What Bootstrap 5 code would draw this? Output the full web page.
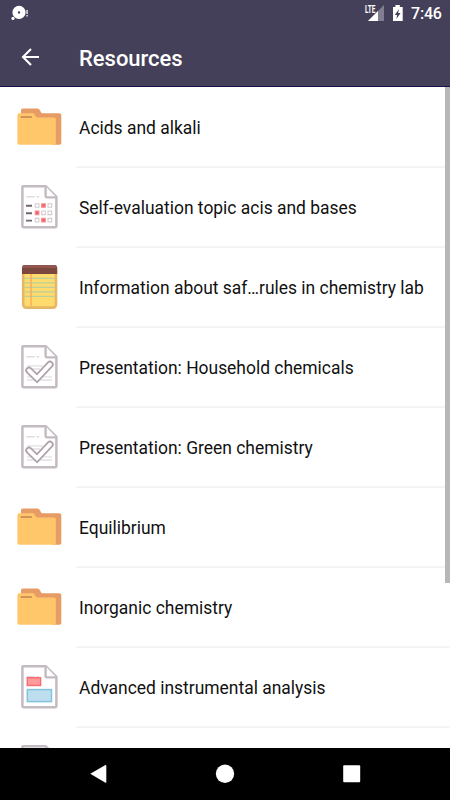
<!DOCTYPE html>
<html lang="en">
<head>
<meta charset="utf-8">
<meta name="viewport" content="width=device-width, initial-scale=1">
<title>Resources</title>
<link href="https://cdn.jsdelivr.net/npm/bootstrap@5.3.0/dist/css/bootstrap.min.css" rel="stylesheet">
<style>
body { font-family: Roboto, sans-serif; color: #111; }
.screen { width: 450px; height: 800px; }
.top-area { height: 87px; background: #454059; border-bottom: 1px solid #1f1048; }
.status { height: 27px; padding: 0 9px 0 10px; }
.clock { width: 30px; font-size: 16px; font-weight: 500; line-height: 28px; padding-top: 1px; letter-spacing: -.2px; }
.title-bar { height: 60px; padding-left: 18px; }
.title { font-size: 22px; font-weight: 500; line-height: 60px; margin: 3px 0 0 36px; letter-spacing: -.02px; }
.resource { height: 80px; padding-left: 17px; }
.resource svg { width: 46px; height: 46px; margin-right: 13px; }
.label-area { height: 80px; padding: 2px 0 0 3px; box-shadow: 0 1px #f3f3f3, inset 0 -1px #f6f6f6; font-size: 17.45px; }
.scroll-thumb { width: 5px; height: 496px; top: 0; right: 0; background: #b7b7b7; }
.system-nav { height: 52px; }
</style>
</head>
<body>
<svg width="0" height="0" class="position-absolute" aria-hidden="true">
  <defs>
    <symbol id="folder" viewBox="0 0 46 46">
      <path d="M4 12V6.2Q4 4.5 5.8 4.5H20.5Q22 4.5 22.8 6L24.6 9.2H42.4Q44.3 9.2 44.3 11V39Q44.3 40.8 42.5 40.8H36Z" fill="#e79c65"/>
      <path d="M.4 11Q.4 9.2 2.2 9.2H15.8Q17 9.2 17.6 10.4L19 12.8Q19.5 13.6 20.5 13.6H37Q38.8 13.6 38.8 15.4V40.8H2.2Q.4 40.8 .4 39Z" fill="#ffc66a"/>
      <path d="M3.6 13H14.8" stroke="#cf9556" stroke-width="2"/>
    </symbol>
    <symbol id="sheet" viewBox="0 0 46 46">
      <path d="M6 2.2H28.6L39.4 13V42Q39.4 43.2 38.2 43.2H6.4Q5.4 43.2 5.4 42V3Q5.4 2.2 6 2.2Z" fill="#fff" stroke="#c3bac2" stroke-width="2.5" stroke-linejoin="round"/>
      <path d="M28.6 2.2V12.2Q28.6 13.4 29.8 13.4H39.4" fill="#fff" stroke="#c3bac2" stroke-width="2.4" stroke-linejoin="round"/>
      <path d="M9.5 12.8H17.5M19.5 12.8H22" stroke="#e0dadf" stroke-width="1.4"/>
    </symbol>
    <symbol id="topsheet" viewBox="0 0 46 46">
      <path d="M5.4 46V3Q5.4 2.2 6 2.2H28.6L39.4 13V46Z" fill="#fff" stroke="#c3bac2" stroke-width="2.5"/>
    </symbol>
    <symbol id="quiz" viewBox="0 0 46 46">
      <use href="#sheet"/>
      <path d="M9 21.8H15M9 29.2H15M9 36.6H15" stroke="#746672" stroke-width="1.9"/>
      <g fill="#fff" stroke="#d2cad0" stroke-width="1.1">
        <path d="M18.3 19.7h3.6v3.6h-3.6zM31 19.7h3.6v3.6h-3.6zM24.7 27h3.6v3.6h-3.6zM31 27h3.6v3.6h-3.6zM18.3 34.4h3.6v3.6h-3.6zM31 34.4h3.6v3.6h-3.6z"/>
        <path d="M24.7 19.7h3.6v3.6h-3.6zM18.3 27h3.6v3.6h-3.6zM24.7 34.4h3.6v3.6h-3.6z" fill="#fb5c62" stroke="#f48e94"/>
      </g>
    </symbol>
    <symbol id="notepad" viewBox="0 0 46 46">
      <rect x="6.2" y="3" width="32.8" height="40.6" rx="3" fill="#ffda6c" stroke="#e5b765" stroke-width="2.6"/>
      <path d="M7.5 14.4H37.8M7.5 18.9H37.8M7.5 23.4H37.8M7.5 27.9H37.8M7.5 32.4H37.8" stroke="#b9d09a" stroke-width="1.4"/>
      <path d="M14 10V42" stroke="#fba65b" stroke-width="1.3"/>
      <path d="M5 10V4Q5 1 8 1H37Q40.2 1 40.2 4V10Z" fill="#7c473f"/>
      <path d="M5 4Q5 1 8 1H37Q40.2 1 40.2 4Z" fill="#91574e"/>
    </symbol>
    <symbol id="check" viewBox="0 0 46 46">
      <use href="#sheet"/>
      <path d="M10 21.8H26M10 25H23M10 32.8H35M10 36H35" stroke="#e4dfe3" stroke-width="1.3"/>
      <path d="M12 26.4L20 34.2L33 20.4" fill="none" stroke="#b0a3ad" stroke-width="7.4" stroke-linecap="round"/>
      <path d="M12 26.4L20 34.2L33 20.4" fill="none" stroke="#fff" stroke-width="3.8" stroke-linecap="round"/>
    </symbol>
    <symbol id="blocks" viewBox="0 0 46 46">
      <use href="#sheet"/>
      <rect x="10.3" y="13.7" width="13.3" height="7.8" fill="#ff9a9d" stroke="#fb6c71" stroke-width="1.4"/>
      <rect x="10.3" y="25.6" width="24.2" height="12" fill="#bcdeef" stroke="#84c3dd" stroke-width="1.5"/>
    </symbol>
  </defs>
</svg>
<div class="screen d-flex flex-column overflow-hidden bg-white">
  <header class="top-area flex-shrink-0 text-white">
    <div class="status d-flex align-items-center">
      <svg width="20" height="20" viewBox="0 0 20 20">
        <circle cx="9" cy="8.4" r="3.9" fill="none" stroke="#fff" stroke-width="5.4"/>
        <circle cx="3" cy="14.4" r="1.6" fill="#fff"/>
        <path d="M17.1 6V10M17.1 11V12.5" stroke="#d5d3dc" stroke-width="1.6"/>
      </svg>
      <svg class="ms-auto" width="22" height="20" viewBox="-1 0 22 20">
        <path d="M20 1V17H4Z" fill="#827e92"/>
        <path d="M0 0H12V9.5H0Z" fill="#454059"/>
        <path d="M14 7V17H4L11.5 9.5Z" fill="#fff"/>
        <text x="1" y="9" font-size="10" font-weight="700" textLength="10.5" lengthAdjust="spacingAndGlyphs" fill="#fff">LTE</text>
      </svg>
      <svg class="ms-1 me-1" width="14" height="20" viewBox="-1 0 14 20">
        <path d="M3 3H5.4V1H9.8V3H12.7V17H3Z" fill="#fff"/>
        <path d="M9 5L4.8 11H7.2L6.4 15L10.6 9H8.1Z" fill="#454059"/>
      </svg>
      <span class="clock ms-1">7:46</span>
    </div>
    <div class="title-bar d-flex align-items-center">
      <svg width="25" height="24" viewBox="0 0 25 24" fill="none" stroke="#fff" stroke-width="2.1"><path d="M21 12H5M13 4L5 12L13 20"/></svg>
      <h1 class="title">Resources</h1>
    </div>
  </header>
  <main class="position-relative flex-grow-1 overflow-hidden">
    <div class="resource d-flex align-items-center"><svg><use href="#folder"/></svg><div class="label-area flex-grow-1 d-flex align-items-center"><span>Acids and alkali</span></div></div>
    <div class="resource d-flex align-items-center"><svg><use href="#quiz"/></svg><div class="label-area flex-grow-1 d-flex align-items-center"><span>Self-evaluation topic acis and bases</span></div></div>
    <div class="resource d-flex align-items-center"><svg><use href="#notepad"/></svg><div class="label-area flex-grow-1 d-flex align-items-center"><span>Information about saf…rules in chemistry lab</span></div></div>
    <div class="resource d-flex align-items-center"><svg><use href="#check"/></svg><div class="label-area flex-grow-1 d-flex align-items-center"><span>Presentation: Household chemicals</span></div></div>
    <div class="resource d-flex align-items-center"><svg><use href="#check"/></svg><div class="label-area flex-grow-1 d-flex align-items-center"><span>Presentation: Green chemistry</span></div></div>
    <div class="resource d-flex align-items-center"><svg><use href="#folder"/></svg><div class="label-area flex-grow-1 d-flex align-items-center"><span>Equilibrium</span></div></div>
    <div class="resource d-flex align-items-center"><svg><use href="#folder"/></svg><div class="label-area flex-grow-1 d-flex align-items-center"><span>Inorganic chemistry</span></div></div>
    <div class="resource d-flex align-items-center"><svg><use href="#blocks"/></svg><div class="label-area flex-grow-1 d-flex align-items-center"><span>Advanced instrumental analysis</span></div></div>
    <div class="resource d-flex align-items-center"><svg><use href="#topsheet"/></svg></div>
    <div class="scroll-thumb position-absolute"></div>
  </main>
  <nav class="system-nav bg-black flex-shrink-0">
    <svg width="450" height="52" viewBox="0 0 450 52" class="d-block" fill="#fff">
      <path d="M90.3 25.8L105 17.2Q106.3 16.5 106.3 18V34Q106.3 35.2 105 34.5Z"/>
      <circle cx="225" cy="25.7" r="9.2"/>
      <rect x="343.2" y="17.2" width="17" height="17" rx="1"/>
    </svg>
  </nav>
</div>
<script src="https://cdn.jsdelivr.net/npm/bootstrap@5.3.0/dist/js/bootstrap.bundle.min.js"></script>
</body>
</html>
